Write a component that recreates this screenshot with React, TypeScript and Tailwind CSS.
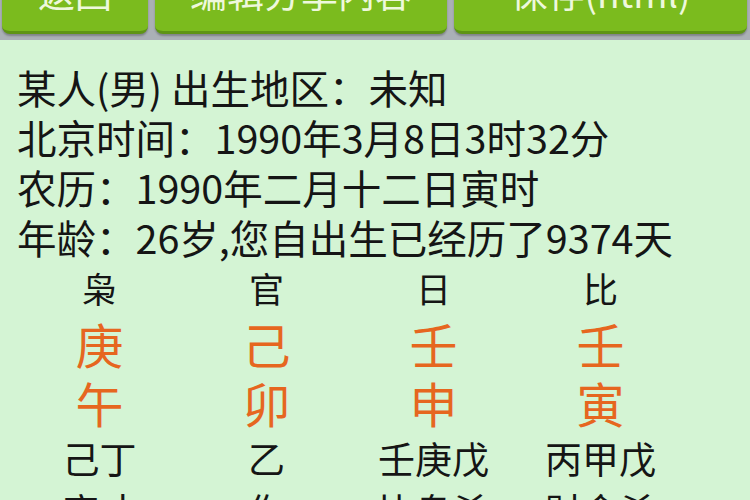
const font = { fontFamily: '"Noto Sans CJK SC", "Noto Sans", sans-serif' }

const info = [
  '某人(男) 出生地区：未知',
  '北京时间：1990年3月8日3时32分',
  '农历：1990年二月十二日寅时',
  '年龄：26岁,您自出生已经历了9374天',
]

const gods = ['枭', '官', '日', '比']
const stems = ['庚', '己', '壬', '壬']
const branches = ['午', '卯', '申', '寅']
const hidden = ['己丁', '乙', '壬庚戊', '丙甲戊']
const hiddenGods = ['官才', '伤', '比枭杀', '财食杀']

export default function App() {
  return (
    <div className="w-[750px] h-[500px] overflow-hidden bg-[#d4f4d4] text-[#151515]" style={font}>
      <div className="h-[40px] bg-[#aab0b6] flex gap-[7px] px-[2px] items-start">
        <button className="w-[146px] h-[62px] -mt-[28px] rounded-b-[8px] bg-[#7bbb1e] border-b-[3px] border-[#5e9414] text-[#eef8dc] text-[37px] leading-[40px] flex justify-center items-start shadow-[0_2px_2px_rgba(0,0,0,0.25)]">返回</button>
        <button className="w-[292px] h-[62px] -mt-[28px] rounded-b-[8px] bg-[#7bbb1e] border-b-[3px] border-[#5e9414] text-[#eef8dc] text-[37px] leading-[40px] flex justify-center items-start shadow-[0_2px_2px_rgba(0,0,0,0.25)]">编辑分享内容</button>
        <button className="w-[293px] h-[62px] -mt-[28px] rounded-b-[8px] bg-[#7bbb1e] border-b-[3px] border-[#5e9414] text-[#eef8dc] text-[37px] leading-[40px] flex justify-center items-start shadow-[0_2px_2px_rgba(0,0,0,0.25)]">保存(html)</button>
      </div>

      <div className="pl-[17px] pt-[22px]">
        {info.map((line) => (
          <div key={line} className="text-[39.5px] leading-[50px] whitespace-nowrap">{line}</div>
        ))}
      </div>

      <div className="ml-[16px] grid grid-cols-[167px_167px_167px_167px] text-center">
        {gods.map((g) => (
          <div key={g + 'g'} className="text-[35px] leading-[52px]">{g}</div>
        ))}
        {stems.map((s, i) => (
          <div key={'s' + i} className="text-[48px] leading-[58px] text-[#e6661f]">{s}</div>
        ))}
        {branches.map((b) => (
          <div key={b} className="text-[48px] leading-[60px] text-[#e6661f]">{b}</div>
        ))}
        {hidden.map((h) => (
          <div key={h} className="text-[37px] leading-[52px]">{h}</div>
        ))}
        {hiddenGods.map((h) => (
          <div key={h} className="text-[37px] leading-[52px]">{h}</div>
        ))}
      </div>
    </div>
  )
}
